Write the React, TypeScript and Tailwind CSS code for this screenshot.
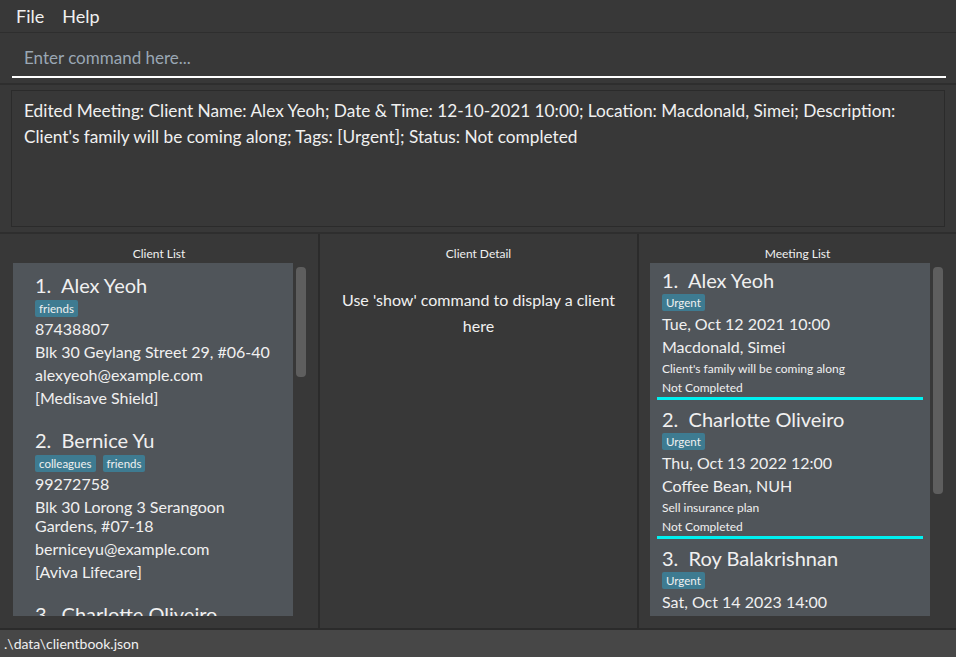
import React from 'react';

const FONT = { fontFamily: '"Lato", "Open Sans", sans-serif' };

const clients = [
  {
    name: 'Alex Yeoh',
    tags: ['friends'],
    phone: '87438807',
    address: ['Blk 30 Geylang Street 29, #06-40'],
    email: 'alexyeoh@example.com',
    plan: '[Medisave Shield]',
  },
  {
    name: 'Bernice Yu',
    tags: ['colleagues', 'friends'],
    phone: '99272758',
    address: ['Blk 30 Lorong 3 Serangoon', 'Gardens, #07-18'],
    email: 'berniceyu@example.com',
    plan: '[Aviva Lifecare]',
  },
  {
    name: 'Charlotte Oliveiro',
    tags: ['neighbours'],
    phone: '93210283',
    address: ['Blk 11 Ang Mo Kio Street 74, #11-04'],
    email: 'charlotte@example.com',
    plan: '[Prudential]',
  },
];

const meetings = [
  {
    name: 'Alex Yeoh',
    date: 'Tue, Oct 12 2021 10:00',
    place: 'Macdonald, Simei',
    desc: "Client's family will be coming along",
  },
  {
    name: 'Charlotte Oliveiro',
    date: 'Thu, Oct 13 2022 12:00',
    place: 'Coffee Bean, NUH',
    desc: 'Sell insurance plan',
  },
  {
    name: 'Roy Balakrishnan',
    date: 'Sat, Oct 14 2023 14:00',
    place: 'Starbucks, Jurong',
    desc: 'Discuss policy renewal',
  },
];

const Tag: React.FC<{ label: string }> = ({ label }) => (
  <span className="bg-[#3e7b91] text-[#f0f0f0] text-[11.5px] leading-[17px] px-[4px] rounded-[2px]">
    {label}
  </span>
);

const Scrollbar: React.FC<{ h: string }> = ({ h }) => (
  <div className="w-[12px] pt-[4px] flex justify-center">
    <div className={`w-[10px] ${h} bg-[#5e5e5e] rounded-[4px]`} />
  </div>
);

const App: React.FC = () => {
  return (
    <div className="w-full h-[657px] bg-[#383838] text-[#f0f0f0] flex flex-col overflow-hidden" style={FONT}>
      {/* Menu bar */}
      <div className="h-[33px] shrink-0 flex items-center gap-[18px] px-[16px] text-[18px] border-b border-[#2e2e2e]">
        <span>File</span>
        <span>Help</span>
      </div>

      {/* Command box */}
      <div className="h-[52px] shrink-0 pl-[12px] pr-[10px] pt-[12px] border-b-2 border-[#2e2e2e]">
        <div className="h-[33px] border-b-2 border-white flex items-end pb-[8px] pl-[12px] text-[17px] leading-[20px] text-[#9aa7b4]">
          Enter command here...
        </div>
      </div>

      {/* Result display */}
      <div className="h-[149px] shrink-0 px-[11px] py-[5px] border-b-2 border-[#2e2e2e]">
        <div className="h-full border border-[#2b2b2b] px-[12px] pt-[7px] text-[17.25px] leading-[26px]">
          Edited Meeting: Client Name: Alex Yeoh; Date &amp; Time: 12-10-2021 10:00; Location: Macdonald, Simei; Description:
          Client's family will be coming along; Tags: [Urgent]; Status: Not completed
        </div>
      </div>

      {/* Panels */}
      <div className="flex-1 min-h-0 flex">
        {/* Client list */}
        <div className="w-[320px] shrink-0 flex flex-col border-r-2 border-[#2b2b2b]">
          <div className="h-[29px] shrink-0 flex items-end justify-center text-[12px]">Client List</div>
          <div className="flex-1 min-h-0 flex pl-[13px] pb-[12px]">
            <div className="w-[280px] bg-[#50555a] overflow-hidden">
              {clients.map((c, i) => (
                <div key={c.name} className="pl-[22px] pt-[9px] pb-[9px]">
                  <div className="text-[20px] leading-[26px]">
                    {i + 1}.&nbsp; {c.name}
                  </div>
                  <div className="flex gap-[7px] mt-[2px]">
                    {c.tags.map((t) => (
                      <Tag key={t} label={t} />
                    ))}
                  </div>
                  <div className="text-[16px] leading-[23px]">{c.phone}</div>
                  <div className="text-[16px] leading-[19px] py-[2px]">
                    {c.address.map((a) => (
                      <div key={a}>{a}</div>
                    ))}
                  </div>
                  <div className="text-[16px] leading-[23px]">{c.email}</div>
                  <div className="text-[16px] leading-[23px]">{c.plan}</div>
                </div>
              ))}
            </div>
            <div className="ml-[2px]">
              <Scrollbar h="h-[110px]" />
            </div>
          </div>
        </div>

        {/* Client detail */}
        <div className="w-[319px] shrink-0 flex flex-col border-r-2 border-[#2b2b2b]">
          <div className="h-[29px] shrink-0 flex items-end justify-center text-[12px]">Client Detail</div>
          <div className="pt-[24px] px-[14px] text-center text-[16px] leading-[26px]">
            Use 'show' command to display a client here
          </div>
        </div>

        {/* Meeting list */}
        <div className="flex-1 flex flex-col">
          <div className="h-[29px] shrink-0 flex items-end justify-center text-[12px]">Meeting List</div>
          <div className="flex-1 min-h-0 flex pl-[11px] pb-[12px]">
            <div className="w-[280px] bg-[#50555a] overflow-hidden">
              {meetings.map((m, i) => (
                <div key={m.name} className="px-[7px] pt-[4px]">
                  <div className="pl-[5px]">
                    <div className="text-[20px] leading-[26px]">
                      {i + 1}.&nbsp; {m.name}
                    </div>
                    <div className="flex mt-[1px]">
                      <Tag label="Urgent" />
                    </div>
                    <div className="text-[16px] leading-[23px] mt-[1px]">{m.date}</div>
                    <div className="text-[16px] leading-[23px]">{m.place}</div>
                    <div className="text-[12px] leading-[19px] mt-[1px]">{m.desc}</div>
                    <div className="text-[12px] leading-[19px]">Not Completed</div>
                  </div>
                  <div className="h-[3px] bg-[#00f0f0] mb-[2px]" />
                </div>
              ))}
            </div>
            <div className="ml-[2px]">
              <Scrollbar h="h-[227px]" />
            </div>
          </div>
        </div>
      </div>

      {/* Status bar */}
      <div className="h-[29px] shrink-0 bg-[#474747] border-t-2 border-[#2b2b2b] flex items-center px-[4px] text-[14px]">
        .\data\clientbook.json
      </div>
    </div>
  );
};

export default App;
